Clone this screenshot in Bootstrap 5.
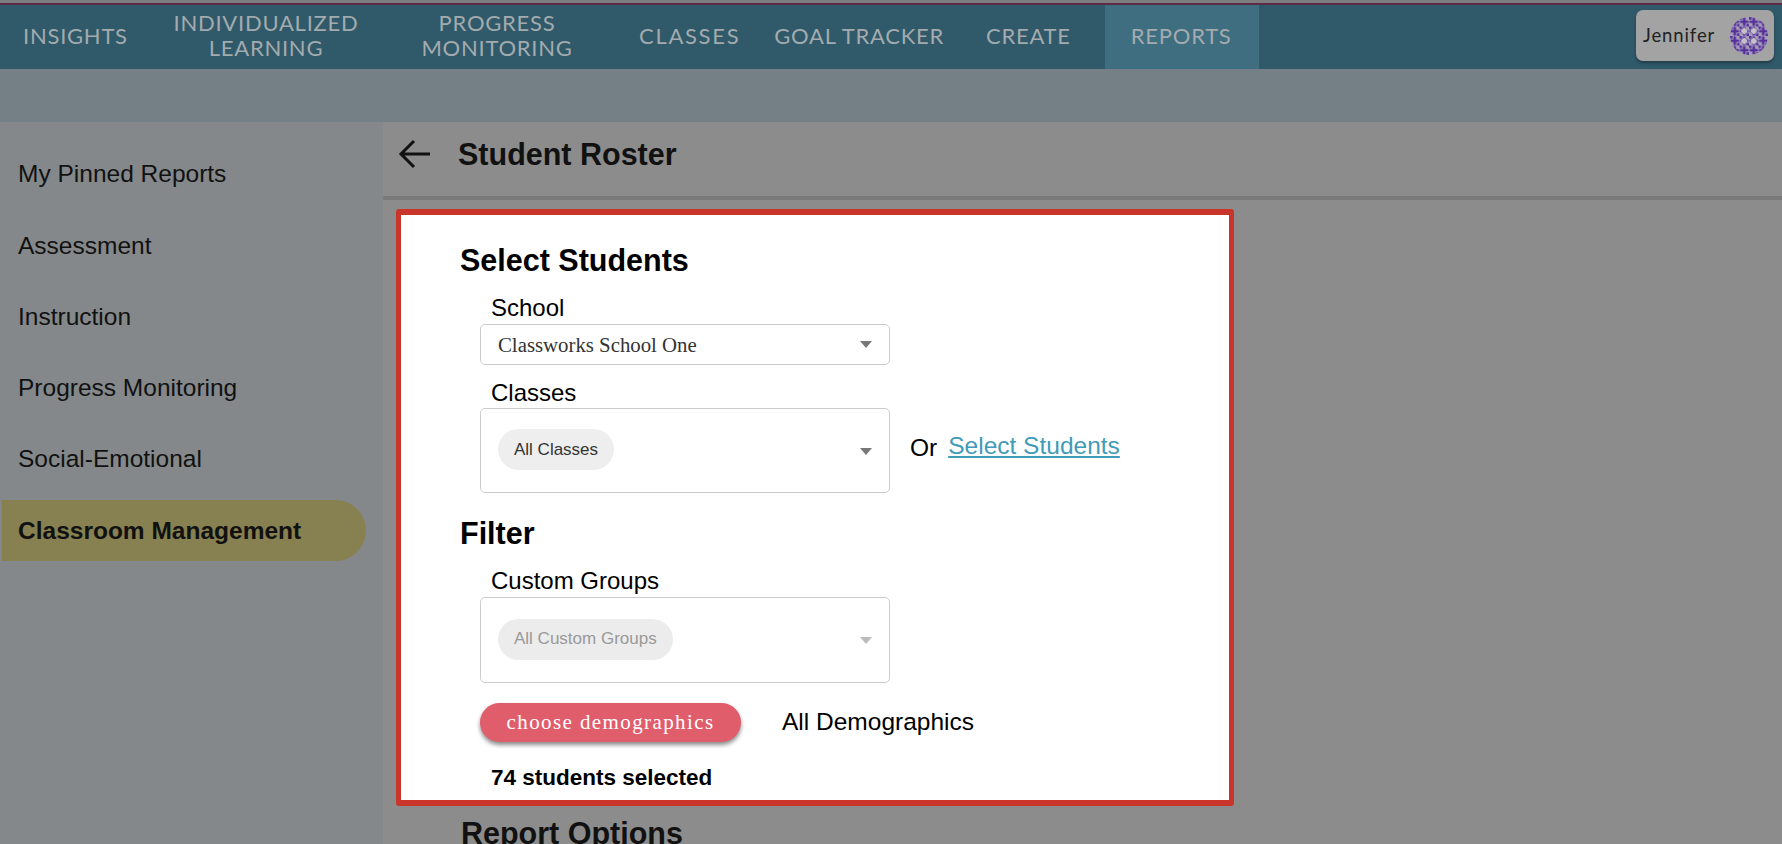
<!DOCTYPE html>
<html lang="en">
<head>
<meta charset="utf-8">
<title>Student Roster</title>
<link href="https://cdn.jsdelivr.net/npm/bootstrap@5.3.0/dist/css/bootstrap.min.css" rel="stylesheet">
<style>
html,body{height:844px;overflow:hidden;}
body{background:#8c8c8c;font-family:"Liberation Sans",Arial,sans-serif;color:#000;}
.top-edge{height:3px;background:#7d7d80;}
.top-line{height:2px;background:#5b2c47;}
.app-bar{height:64px;background:#30596a;}
.app-tab{font-family:Lato,sans-serif;font-size:22px;line-height:25px;color:#a3abae;text-align:center;letter-spacing:.75px;text-decoration:none;display:flex;align-items:center;height:100%;flex:none;padding-bottom:4px;}
.t1{padding-left:23px;width:128px;}
.t2{width:276px;justify-content:center;}
.t3{width:186px;justify-content:center;}
.t4{padding-left:49px;padding-right:17px;letter-spacing:1.7px;}
.t5{padding-left:17px;padding-right:21px;}
.t6{padding-left:21px;padding-right:34px;}
.t7{padding-left:26px;padding-right:27px;background:#3e6e7f;}
.user-chip{width:138px;height:51px;background:#a3a3a3;border-radius:7px;box-shadow:0 2px 3px rgba(0,0,0,.35);margin:5px 8px 0 0;padding:0 6px 0 7px;font-family:Lato,sans-serif;font-size:18.5px;letter-spacing:.9px;color:#222;}
.sub-band{height:53px;background:#748086;}
.work-row{height:722px;}
.side-col{width:383px;background:#84888a;padding-top:17px;flex:none;}
.side-item{height:71.3px;display:flex;align-items:center;padding-left:18px;font-size:24.5px;color:#111;}
.side-active{height:61px;margin:5px 17px 0 2px;padding-left:16px;background:#878050;font-weight:700;border-radius:0 31px 31px 0;}
.main-col{flex:1;min-width:0;}
.title-bar{height:78px;border-bottom:4px solid #7a7a7a;padding:0 0 10px 15px;gap:27px;}
.title-text{font-size:30.5px;font-weight:700;line-height:36px;color:#111;margin:0;}
.focus-box{margin:9px 0 0 13px;width:838px;border:solid #c9352a;border-width:6px 5px 6px 5px;border-radius:3px;background:#fff;padding:27px 0 8px 59px;}
.sect-head{font-size:30.5px;font-weight:700;line-height:36px;margin:0;}
.field-label{font-size:24px;line-height:28px;margin:0 0 0 31px;}
.pick-box{width:410px;margin-left:20px;border:1px solid #ccc;border-radius:5px;padding-left:17px;padding-right:17px;}
.pick-short{height:41px;font-family:"Liberation Serif",serif;font-size:20.8px;color:#333;}
.pick-tall{height:85px;padding-bottom:2px;}
.pick-tall .drop-arrow{margin-top:3px;}
.pill-tag{height:41px;border-radius:21px;background:#eee;font-size:17px;padding:0 16px;color:#333;}
.pill-off{background:#ececec;color:#999;}
.drop-arrow{width:0;height:0;border:6.5px solid transparent;border-top:7px solid #777;border-bottom:0;}
.drop-off{border-top-color:#bbb;}
.or-text{font-size:24.5px;margin:0 0 5px 20px;line-height:28px;}
.or-link{color:#3f9bb8;margin-left:11px;display:inline-block;transform:translateY(-2px);}
.demo-btn{width:261px;height:39px;margin-left:20px;background:#e05d6b;color:#fff;border:0;border-radius:20px;font-family:"Liberation Serif",serif;font-size:21px;letter-spacing:1.4px;box-shadow:0 3px 4px rgba(0,0,0,.45);padding:0;}
.demo-note{font-size:24.5px;margin-left:41px;}
.count-line{font-size:22.5px;font-weight:700;line-height:28px;margin:22px 0 0 31px;}
.after-head{margin:9px 0 0 78px;color:#111;}
</style>
</head>
<body>
<div class="top-edge"></div>
<div class="top-line"></div>
<nav class="app-bar d-flex">
  <a class="app-tab t1" href="#">INSIGHTS</a>
  <a class="app-tab t2" href="#">INDIVIDUALIZED<br>LEARNING</a>
  <a class="app-tab t3" href="#">PROGRESS<br>MONITORING</a>
  <a class="app-tab t4" href="#">CLASSES</a>
  <a class="app-tab t5" href="#">GOAL TRACKER</a>
  <a class="app-tab t6" href="#">CREATE</a>
  <a class="app-tab t7" href="#">REPORTS</a>
  <div class="user-chip ms-auto d-flex align-items-center justify-content-between">
    <span>Jennifer</span>
    <svg width="38" height="38" viewBox="0 0 38 38" aria-hidden="true">
      <defs>
        <pattern id="quilt" width="9.5" height="9.5" patternUnits="userSpaceOnUse">
          <path d="M4.75 .5v8.500M.5 4.750h8.500" stroke="#56309a" stroke-width="2.600"/>
          <path d="M0 0h2.500v2.500H0zM7 7h2.500v2.500H7z" fill="#56309a"/>
        </pattern>
      </defs>
      <circle cx="19" cy="19" r="19" fill="#a79fba"/>
      <circle cx="19" cy="19" r="19" fill="url(#quilt)"/>
      <path d="M14.250 10.500l3.500 3.500-3.500 3.500-3.500-3.500zM23.750 10.500l3.500 3.500-3.500 3.500-3.500-3.500zM14.250 20.500l3.500 3.500-3.500 3.500-3.500-3.500zM23.750 20.500l3.500 3.500-3.500 3.500-3.500-3.500z" fill="#c4c1c9"/>
    </svg>
  </div>
</nav>
<div class="sub-band"></div>
<div class="work-row d-flex">
  <aside class="side-col">
    <div class="side-item">My Pinned Reports</div>
    <div class="side-item">Assessment</div>
    <div class="side-item">Instruction</div>
    <div class="side-item">Progress Monitoring</div>
    <div class="side-item">Social-Emotional</div>
    <div class="side-item side-active">Classroom Management</div>
  </aside>
  <main class="main-col">
    <div class="title-bar d-flex align-items-center">
      <svg width="33" height="30" viewBox="0 0 33 30" aria-hidden="true"><path d="M32 15H3M16 2 3 15l13 13" fill="none" stroke="#111" stroke-width="3"/></svg>
      <h1 class="title-text">Student Roster</h1>
    </div>
    <section class="focus-box">
      <h2 class="sect-head">Select Students</h2>
      <p class="field-label mt-3">School</p>
      <div class="pick-box pick-short d-flex align-items-center justify-content-between" style="margin-top:2px">
        <span>Classworks School One</span><span class="drop-arrow"></span>
      </div>
      <p class="field-label" style="margin-top:14px">Classes</p>
      <div class="d-flex align-items-center" style="margin-top:1px">
        <div class="pick-box pick-tall d-flex align-items-center justify-content-between">
          <span class="pill-tag d-flex align-items-center">All Classes</span><span class="drop-arrow"></span>
        </div>
        <span class="or-text">Or<a class="or-link" href="#">Select Students</a></span>
      </div>
      <h2 class="sect-head" style="margin-top:22px">Filter</h2>
      <p class="field-label" style="margin-top:16px">Custom Groups</p>
      <div class="pick-box pick-tall d-flex align-items-center justify-content-between" style="margin-top:2px;height:86px">
        <span class="pill-tag pill-off d-flex align-items-center">All Custom Groups</span><span class="drop-arrow drop-off"></span>
      </div>
      <div class="d-flex align-items-center" style="margin-top:20px">
        <button class="demo-btn" type="button">choose demographics</button>
        <span class="demo-note">All Demographics</span>
      </div>
      <p class="count-line">74 students selected</p>
    </section>
    <h2 class="sect-head after-head">Report Options</h2>
  </main>
</div>
</body>
</html>
